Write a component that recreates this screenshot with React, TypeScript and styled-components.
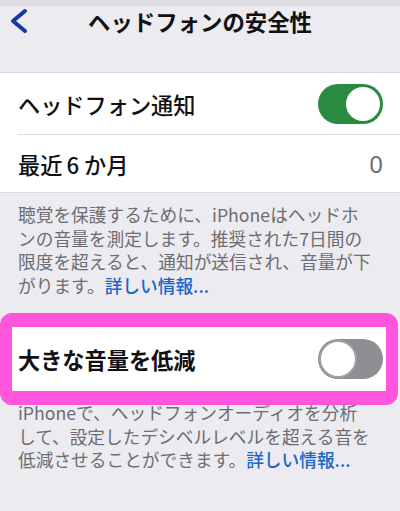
import React from "react";
import styled, { createGlobalStyle } from "styled-components";

const GlobalStyle = createGlobalStyle`
  html, body {
    margin: 0;
    padding: 0;
    background: #ebebf0;
  }
  body {
    font-family: "Noto Sans CJK JP", "Noto Sans", sans-serif;
    -webkit-font-smoothing: antialiased;
  }
`;

const Page = styled.div`
  width: 400px;
  min-height: 511px;
  background: #ebebf0;
  display: flex;
  flex-direction: column;
  overflow: hidden;
`;

const StatusStrip = styled.div`
  height: 6px;
  background: #dedee3;
`;

const NavBar = styled.div`
  height: 30px;
  display: grid;
  grid-template-columns: 60px 1fr 60px;
  align-items: center;
`;

const BackButton = styled.div`
  display: flex;
  align-items: center;
  padding-left: 9px;
  height: 100%;
`;

const Title = styled.div`
  text-align: center;
  font-size: 22.4px;
  font-weight: 700;
  color: #111113;
  line-height: 30px;
  white-space: nowrap;
`;

const Group = styled.div<{ $mt: number }>`
  margin-top: ${(p) => p.$mt}px;
  background: #ffffff;
  border-top: 1px solid #d9d9de;
  border-bottom: 1px solid #d9d9de;
`;

const Row = styled.div<{ $h: number; $divider?: boolean }>`
  height: ${(p) => p.$h}px;
  margin-left: 18px;
  padding-right: 17px;
  display: flex;
  align-items: center;
  justify-content: space-between;
  border-bottom: ${(p) => (p.$divider ? "1px solid #dcdce0" : "none")};
`;

const Label = styled.span<{ $weight?: number }>`
  font-size: 22.2px;
  font-weight: ${(p) => p.$weight ?? 500};
  color: #111113;
  white-space: nowrap;
`;

const Digit = styled.span`
  margin: 0 5px 0 4px;
`;

const Value = styled.span`
  font-size: 24px;
  color: #6d6d72;
  font-family: "Noto Sans", "Noto Sans CJK JP", sans-serif;
`;

const Footer = styled.div<{ $pt: number }>`
  padding: ${(p) => p.$pt}px 18px 0 18px;
  font-size: 17.7px;
  line-height: 23.5px;
  color: #6d6d72;
  white-space: nowrap;
`;

const Link = styled.span`
  color: #1867c9;
  font-weight: 500;
`;

const Highlight = styled.div`
  margin-top: 16px;
  margin-right: 2px;
  border: solid #fd55dc;
  border-width: 14px 12px 14px 12px;
  border-radius: 12px;
  background: #ffffff;
`;

const HighlightRow = styled.div`
  height: 64px;
  padding-left: 6px;
  padding-right: 3px;
  display: flex;
  align-items: center;
  justify-content: space-between;
`;

const Track = styled.div<{ $on: boolean }>`
  width: 65px;
  height: 40px;
  border-radius: 20px;
  background: ${(p) => (p.$on ? "#2a8b43" : "#8e8e93")};
  display: flex;
  align-items: center;
  justify-content: ${(p) => (p.$on ? "flex-end" : "flex-start")};
  padding: 0 1px;
  box-sizing: border-box;
`;

const Knob = styled.div<{ $on: boolean }>`
  width: 38px;
  height: 38px;
  border-radius: 50%;
  background: #ffffff;
  box-sizing: border-box;
  border: 2px solid ${(p) => (p.$on ? "#2a8b43" : "#a0a0a5")};
`;

const Toggle: React.FC<{ on: boolean }> = ({ on }) => (
  <Track $on={on}>
    <Knob $on={on} />
  </Track>
);

const FooterTwo = styled(Footer)`
  margin-top: -4px;
`;

export default function App() {
  return (
    <Page>
      <GlobalStyle />
      <StatusStrip />
      <NavBar>
        <BackButton>
          <svg width="20" height="28" viewBox="0 0 20 28">
            <polyline
              points="16,4 4,14 16,24"
              fill="none"
              stroke="#14399e"
              strokeWidth="4"
              strokeLinecap="round"
              strokeLinejoin="round"
            />
          </svg>
        </BackButton>
        <Title>ヘッドフォンの安全性</Title>
        <div />
      </NavBar>

      <Group $mt={36}>
        <Row $h={61} $divider>
          <Label>ヘッドフォン通知</Label>
          <Toggle on />
        </Row>
        <Row $h={57}>
          <Label>
            最近<Digit>6</Digit>か月
          </Label>
          <Value>0</Value>
        </Row>
      </Group>

      <Footer $pt={10}>
        聴覚を保護するために、iPhoneはヘッドホ
        <br />
        ンの音量を測定します。推奨された7日間の
        <br />
        限度を超えると、通知が送信され、音量が下
        <br />
        がります。<Link>詳しい情報...</Link>
      </Footer>

      <Highlight>
        <HighlightRow>
          <Label $weight={700}>大きな音量を低減</Label>
          <Toggle on={false} />
        </HighlightRow>
      </Highlight>

      <FooterTwo $pt={0}>
        iPhoneで、ヘッドフォンオーディオを分析
        <br />
        して、設定したデシベルレベルを超える音を
        <br />
        低減させることができます。<Link>詳しい情報...</Link>
      </FooterTwo>
    </Page>
  );
}
